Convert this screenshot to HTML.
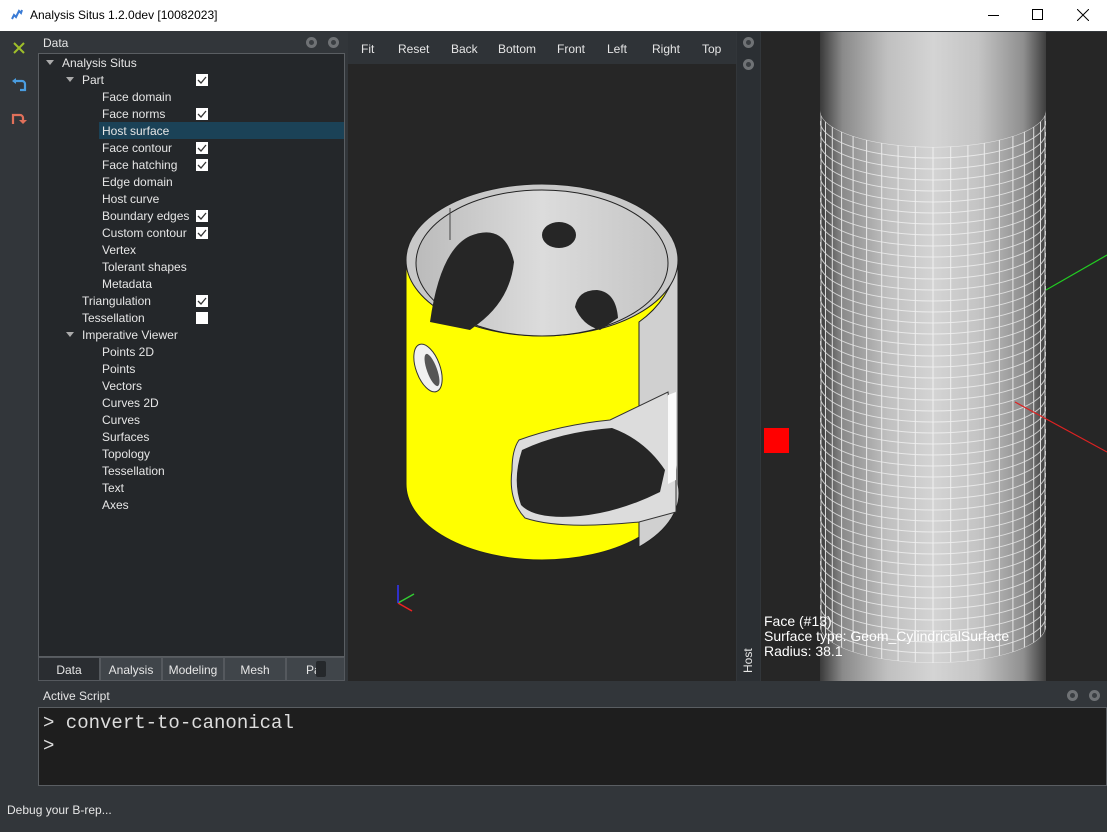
<!DOCTYPE html>
<html><head><meta charset="utf-8"><style>
*{margin:0;padding:0;box-sizing:border-box}
body{width:1107px;height:832px;overflow:hidden;background:#32363a;font-family:"Liberation Sans",sans-serif;font-size:12px;color:#e6e6e6;position:relative}
.a{position:absolute}
.row{position:absolute;height:17px;line-height:17px;white-space:nowrap}
.cb{position:absolute;left:196px;width:12px;height:12px;background:#fff}
.cb svg{position:absolute;left:0;top:0}
.tri{position:absolute;width:0;height:0;border-left:4px solid transparent;border-right:4px solid transparent;border-top:5px solid #aaa}
.tab{position:absolute;top:657px;height:24px;line-height:24px;text-align:center;background:#40454a;border:1px solid #55595e;color:#e6e6e6}
.ic{position:absolute;width:11px;height:11px;border-radius:50%;background:#6f7275}
.ic::after{content:"";position:absolute;left:3px;top:3px;width:5px;height:5px;border-radius:50%;background:#3a3e42}
</style></head><body>
<div class="a" style="left:0;top:0;width:1107px;height:31px;background:#fff"></div>
<svg class="a" style="left:10px;top:8px" width="14" height="14"><path d="M2 11 L4 7 L6 9 L9 3 L11 5 L12 2" stroke="#3a7bd5" stroke-width="2" fill="none"/></svg>
<div class="a" style="left:30px;top:8px;color:#000;font-size:12px">Analysis Situs 1.2.0dev [10082023]</div>
<div class="a" style="left:988px;top:15px;width:11px;height:1px;background:#000"></div>
<div class="a" style="left:1032px;top:9px;width:11px;height:11px;border:1px solid #000"></div>
<svg class="a" style="left:1077px;top:9px" width="12" height="12"><path d="M0 0L12 12M12 0L0 12" stroke="#000" stroke-width="1"/></svg>
<svg class="a" style="left:12px;top:41px" width="14" height="14"><path d="M2 2L12 12M12 2L2 12" stroke="#9fbf2a" stroke-width="2"/></svg>
<svg class="a" style="left:11px;top:76px" width="16" height="16"><path d="M3 5h8a3 3 0 0 1 3 3v6h-5" stroke="#4a9de0" stroke-width="2.2" fill="none"/><path d="M1 5l4-3v6z" fill="#4a9de0"/></svg>
<svg class="a" style="left:11px;top:110px" width="16" height="16"><path d="M2 14V5h7a3 3 0 0 1 3 3v2" stroke="#e0705a" stroke-width="2.2" fill="none"/><path d="M8 10h8l-4 4z" fill="#e0705a"/></svg>
<div class="a" style="left:43px;top:36px">Data</div>
<div class="ic" style="left:306px;top:37px"></div><div class="ic" style="left:328px;top:37px"></div>
<div class="a" style="left:38px;top:53px;width:307px;height:604px;background:#24272a;border:1px solid #5a5e62"></div>
<div class="a" style="left:99px;top:122px;width:245px;height:17px;background:#1b4257"></div>
<div class="tri" style="left:46px;top:60px"></div>
<div class="tri" style="left:66px;top:77px"></div>
<div class="tri" style="left:66px;top:332px"></div>
<div class="row" style="left:62px;top:55px">Analysis Situs</div>
<div class="row" style="left:82px;top:72px">Part</div>
<div class="row" style="left:102px;top:89px">Face domain</div>
<div class="row" style="left:102px;top:106px">Face norms</div>
<div class="row" style="left:102px;top:123px">Host surface</div>
<div class="row" style="left:102px;top:140px">Face contour</div>
<div class="row" style="left:102px;top:157px">Face hatching</div>
<div class="row" style="left:102px;top:174px">Edge domain</div>
<div class="row" style="left:102px;top:191px">Host curve</div>
<div class="row" style="left:102px;top:208px">Boundary edges</div>
<div class="row" style="left:102px;top:225px">Custom contour</div>
<div class="row" style="left:102px;top:242px">Vertex</div>
<div class="row" style="left:102px;top:259px">Tolerant shapes</div>
<div class="row" style="left:102px;top:276px">Metadata</div>
<div class="row" style="left:82px;top:293px">Triangulation</div>
<div class="row" style="left:82px;top:310px">Tessellation</div>
<div class="row" style="left:82px;top:327px">Imperative Viewer</div>
<div class="row" style="left:102px;top:344px">Points 2D</div>
<div class="row" style="left:102px;top:361px">Points</div>
<div class="row" style="left:102px;top:378px">Vectors</div>
<div class="row" style="left:102px;top:395px">Curves 2D</div>
<div class="row" style="left:102px;top:412px">Curves</div>
<div class="row" style="left:102px;top:429px">Surfaces</div>
<div class="row" style="left:102px;top:446px">Topology</div>
<div class="row" style="left:102px;top:463px">Tessellation</div>
<div class="row" style="left:102px;top:480px">Text</div>
<div class="row" style="left:102px;top:497px">Axes</div>
<div class="cb" style="top:74px"><svg width="12" height="12"><path d="M2 6l3 3 5-6" stroke="#333" stroke-width="1.3" fill="none"/></svg></div>
<div class="cb" style="top:108px"><svg width="12" height="12"><path d="M2 6l3 3 5-6" stroke="#333" stroke-width="1.3" fill="none"/></svg></div>
<div class="cb" style="top:142px"><svg width="12" height="12"><path d="M2 6l3 3 5-6" stroke="#333" stroke-width="1.3" fill="none"/></svg></div>
<div class="cb" style="top:159px"><svg width="12" height="12"><path d="M2 6l3 3 5-6" stroke="#333" stroke-width="1.3" fill="none"/></svg></div>
<div class="cb" style="top:210px"><svg width="12" height="12"><path d="M2 6l3 3 5-6" stroke="#333" stroke-width="1.3" fill="none"/></svg></div>
<div class="cb" style="top:227px"><svg width="12" height="12"><path d="M2 6l3 3 5-6" stroke="#333" stroke-width="1.3" fill="none"/></svg></div>
<div class="cb" style="top:295px"><svg width="12" height="12"><path d="M2 6l3 3 5-6" stroke="#333" stroke-width="1.3" fill="none"/></svg></div>
<div class="cb" style="top:312px"></div>
<div class="tab" style="left:38px;width:62px;background:#2a2d31">Data</div>
<div class="tab" style="left:100px;width:62px">Analysis</div>
<div class="tab" style="left:162px;width:62px">Modeling</div>
<div class="tab" style="left:224px;width:62px">Mesh</div>
<div class="tab" style="left:286px;width:59px;text-align:left;padding-left:19px">Pa</div>
<div class="a" style="left:316px;top:661px;width:10px;height:16px;background:#25282b;border-radius:2px"></div>
<div class="a" style="left:348px;top:32px;width:388px;height:32px;background:#2f3337"></div>
<div class="a" style="left:361px;top:42px">Fit</div>
<div class="a" style="left:398px;top:42px">Reset</div>
<div class="a" style="left:451px;top:42px">Back</div>
<div class="a" style="left:498px;top:42px">Bottom</div>
<div class="a" style="left:557px;top:42px">Front</div>
<div class="a" style="left:607px;top:42px">Left</div>
<div class="a" style="left:652px;top:42px">Right</div>
<div class="a" style="left:702px;top:42px">Top</div>
<div class="a" style="left:348px;top:64px;width:388px;height:617px;background:#262626"></div>
<svg class="a" style="left:348px;top:64px" width="388" height="617" viewBox="348 64 388 617">
<defs><linearGradient id="gr" x1="0" x2="1"><stop offset="0" stop-color="#bbb"/><stop offset=".5" stop-color="#dcdcdc"/><stop offset="1" stop-color="#c4c4c4"/></linearGradient></defs>
<path d="M406 262 L406 484 A136 76 0 0 0 678 484 L678 262 A136 76 0 0 0 406 262Z" fill="#ffff00" stroke="#222" stroke-width="1"/>
<path d="M639 322 L639 547 A136 76 0 0 0 678 484 L678 262 Q670 300 639 322Z" fill="#d0d0d0" stroke="#222"/>
<ellipse cx="542" cy="260" rx="136" ry="76" fill="#c8c8c8" stroke="#222"/>
<ellipse cx="542" cy="263" rx="126" ry="73" fill="url(#gr)" stroke="#222"/>
<path d="M450 208 L450 240" stroke="#444"/>
<path d="M430 322 Q440 250 470 236 Q505 222 514 262 Q510 300 478 324 L470 330Z" fill="#262626"/>
<ellipse cx="559" cy="235" rx="17" ry="13" fill="#262626"/>
<path d="M575 307 Q578 290 597 290 Q616 292 618 318 L600 330 Q582 325 575 307Z" fill="#262626"/>
<ellipse cx="428" cy="368" rx="12" ry="25" transform="rotate(-20 428 368)" fill="#f0f0f0" stroke="#333"/>
<ellipse cx="432" cy="370" rx="5" ry="17" transform="rotate(-20 432 370)" fill="#555"/>
<path d="M519 440 Q560 425 610 420 L668 392 L676 470 L676 512 L639 522 Q560 530 525 518 Q508 500 512 470 Q512 450 519 440Z" fill="#dcdcdc" stroke="#333"/>
<path d="M522 450 Q560 432 612 428 Q645 440 665 470 L660 492 Q620 512 580 516 Q535 520 521 505 Q512 480 522 450Z" fill="#262626"/>
<path d="M668 395 L676 392 L676 480 L668 484Z" fill="#fafafa"/>
</svg>
<svg class="a" style="left:392px;top:580px" width="30" height="35"><path d="M6 23 L22 14" stroke="#3c3" stroke-width="1.5"/><path d="M6 23 L20 31" stroke="#e22" stroke-width="1.5"/><path d="M6 23 L6 5" stroke="#33f" stroke-width="1.5"/></svg>
<div class="a" style="left:737px;top:32px;width:23px;height:649px;background:#2b2f33"></div>
<div class="ic" style="left:743px;top:37px"></div><div class="ic" style="left:743px;top:59px"></div>
<div class="a" style="left:741px;top:673px;transform:rotate(-90deg);transform-origin:0 0;font-size:12px">Host</div>
<div class="a" style="left:761px;top:32px;width:346px;height:649px;background:#262626"></div>
<div class="a" style="left:820px;top:32px;width:226px;height:649px;background:linear-gradient(90deg,#3a3a3a 0%,#8a8a8a 10%,#c0c0c0 30%,#d4d4d4 50%,#c4c4c4 70%,#8f8f8f 90%,#3e3e3e 100%)"></div>
<svg class="a" style="left:761px;top:32px" width="346" height="649" viewBox="761 32 346 649">
<defs><clipPath id="g"><path d="M820 110 A113 37 0 0 0 1046 110 L1046 626 A113 37 0 0 1 820 626Z"/></clipPath>
<path id="h" d="M820 0 A113 37 0 0 0 1046 0" stroke="#f4f4f4" stroke-width="1" fill="none" opacity=".85"/></defs>
<g clip-path="url(#g)" stroke="#f4f4f4" opacity=".85">
<path d="M821 100V680M825.5 100V680M832.3 100V680M841.6 100V680M853.1 100V680M866.6 100V680M881.7 100V680M898.1 100V680M915.3 100V680M933 100V680M950.7 100V680M967.9 100V680M984.3 100V680M999.4 100V680M1012.9 100V680M1024.4 100V680M1033.7 100V680M1040.5 100V680M1045 100V680"/>
<use href="#h" y="110"/><use href="#h" y="121"/><use href="#h" y="132"/><use href="#h" y="143"/><use href="#h" y="154"/><use href="#h" y="165"/><use href="#h" y="176"/><use href="#h" y="187"/><use href="#h" y="198"/><use href="#h" y="209"/><use href="#h" y="220"/><use href="#h" y="231"/><use href="#h" y="242"/><use href="#h" y="253"/><use href="#h" y="264"/><use href="#h" y="275"/><use href="#h" y="286"/><use href="#h" y="297"/><use href="#h" y="308"/><use href="#h" y="319"/><use href="#h" y="330"/><use href="#h" y="341"/><use href="#h" y="352"/><use href="#h" y="363"/><use href="#h" y="374"/><use href="#h" y="385"/><use href="#h" y="396"/><use href="#h" y="407"/><use href="#h" y="418"/><use href="#h" y="429"/><use href="#h" y="440"/><use href="#h" y="451"/><use href="#h" y="462"/><use href="#h" y="473"/><use href="#h" y="484"/><use href="#h" y="495"/><use href="#h" y="506"/><use href="#h" y="517"/><use href="#h" y="528"/><use href="#h" y="539"/><use href="#h" y="550"/><use href="#h" y="561"/><use href="#h" y="572"/><use href="#h" y="583"/><use href="#h" y="594"/><use href="#h" y="605"/><use href="#h" y="616"/><use href="#h" y="626"/>
</g>
<path d="M1046 290 L1107 255" stroke="#2c2" stroke-width="1.2"/>
<path d="M1015 402 L1107 452" stroke="#d22" stroke-width="1.2"/>
<rect x="764" y="428" width="25" height="25" fill="#f00"/>
</svg>
<div class="a" style="left:764px;top:614px;font-size:14px;line-height:15px;color:#fff">Face (#13)<br>Surface type: Geom_CylindricalSurface<br>Radius: 38.1</div>
<div class="a" style="left:43px;top:689px">Active Script</div>
<div class="ic" style="left:1067px;top:690px"></div><div class="ic" style="left:1089px;top:690px"></div>
<div class="a" style="left:38px;top:707px;width:1069px;height:79px;background:#1e1e1e;border:1px solid #5a5e62"></div>
<div class="a" style="left:43px;top:712px;font-family:'Liberation Mono',monospace;font-size:19px;line-height:23px;color:#ddd">&gt; convert-to-canonical<br>&gt;</div>
<div class="a" style="left:7px;top:803px">Debug your B-rep...</div>
</body></html>
